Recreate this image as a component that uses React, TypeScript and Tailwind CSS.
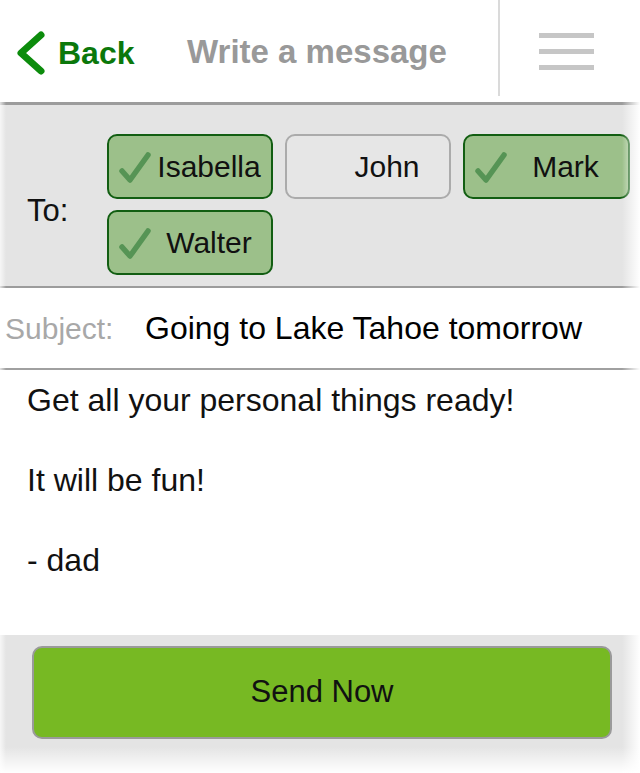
import React from "react";

function Check() {
  return (
    <svg width="36" height="34" viewBox="0 0 36 34" className="shrink-0">
      <path
        d="M5 21 L13 30 L31 5"
        fill="none"
        stroke="#4f8f4f"
        strokeWidth="5.5"
        strokeLinecap="round"
        strokeLinejoin="round"
        opacity="0.9"
      />
    </svg>
  );
}

function Chip({ name, on }: { name: string; on: boolean }) {
  return (
    <div
      className={
        on
          ? "relative h-[65px] rounded-[10px] border-2 border-[#125e12] bg-[#9cc08a] flex items-center"
          : "relative h-[65px] rounded-[10px] border-2 border-[#ababab] bg-[#e6e6e6] flex items-center"
      }
    >
      <div className="w-[40px] pl-[8px] flex items-center">{on ? <Check /> : null}</div>
      <div className="flex-1 text-center text-[30px] text-[#111] pr-[2px]">{name}</div>
    </div>
  );
}

export default function App() {
  return (
    <div className="relative w-[640px] h-[773px] bg-white overflow-hidden font-['Liberation_Sans',Arial,sans-serif]">
      {/* Header */}
      <div className="h-[102px] flex items-center">
        <div className="flex items-center pl-[13px] w-[170px] mt-[4px]">
          <svg width="36" height="46" viewBox="0 0 36 46">
            <polyline
              points="28,5 8,23 28,41"
              fill="none"
              stroke="#0c8c0c"
              strokeWidth="7"
              strokeLinecap="round"
              strokeLinejoin="round"
            />
          </svg>
          <span className="ml-[9px] text-[32px] font-bold text-[#0b780b] leading-none">Back</span>
        </div>
        <div className="ml-[17px] text-[33px] font-bold text-[#999] leading-none">Write a message</div>
        <div className="ml-auto self-start w-[2px] h-[96px] bg-[#dadada] mr-[39px]" />
        <div className="mr-[46px] flex flex-col gap-[11px]">
          <div className="w-[55px] h-[5px] bg-[#c6c6c6]" />
          <div className="w-[55px] h-[5px] bg-[#c6c6c6]" />
          <div className="w-[55px] h-[5px] bg-[#c6c6c6]" />
        </div>
      </div>
      <div className="h-[3px] bg-[#9c9c9c]" />

      {/* To section */}
      <div className="h-[181px] bg-[#e4e4e4] flex items-start pt-[29px]">
        <div className="w-[107px] pl-[27px] text-[31px] text-[#111] mt-[61px] leading-none">To:</div>
        <div className="grid grid-cols-[166px_166px_167px] gap-x-[12px] gap-y-[11px]">
          <Chip name="Isabella" on />
          <Chip name="John" on={false} />
          <Chip name="Mark" on />
          <Chip name="Walter" on />
        </div>
      </div>
      <div className="h-[2px] bg-[#9c9c9c]" />

      {/* Subject */}
      <div className="h-[80px] flex items-center">
        <div className="pl-[5px] w-[145px] text-[30px] text-[#a8a8a8]">Subject:</div>
        <div className="text-[32px] text-black">Going to Lake Tahoe tomorrow</div>
      </div>
      <div className="h-[2px] bg-[#a0a0a0]" />

      {/* Body */}
      <div className="h-[265px] pl-[27px] pt-[10px] text-[32px] text-[#111] leading-[40px]">
        <p>Get all your personal things ready!</p>
        <p className="mt-[40px]">It will be fun!</p>
        <p className="mt-[40px]">- dad</p>
      </div>

      {/* Bottom */}
      <div className="h-[138px] bg-[#e4e4e4] pt-[11px] pl-[32px] pr-[28px]">
        <button className="w-full h-[93px] rounded-[10px] border-2 border-[#9a9a9a] bg-[#77b923] text-[31px] text-[#111]">
          Send Now
        </button>
      </div>

      {/* edge fades */}
      <div className="absolute top-0 right-0 h-full w-[18px] bg-gradient-to-r from-transparent to-white" />
      <div className="absolute left-0 bottom-0 w-full h-[26px] bg-gradient-to-b from-transparent to-white" />
      <div className="absolute left-0 top-0 h-full w-[6px] bg-gradient-to-l from-transparent to-white opacity-70" />
    </div>
  );
}
